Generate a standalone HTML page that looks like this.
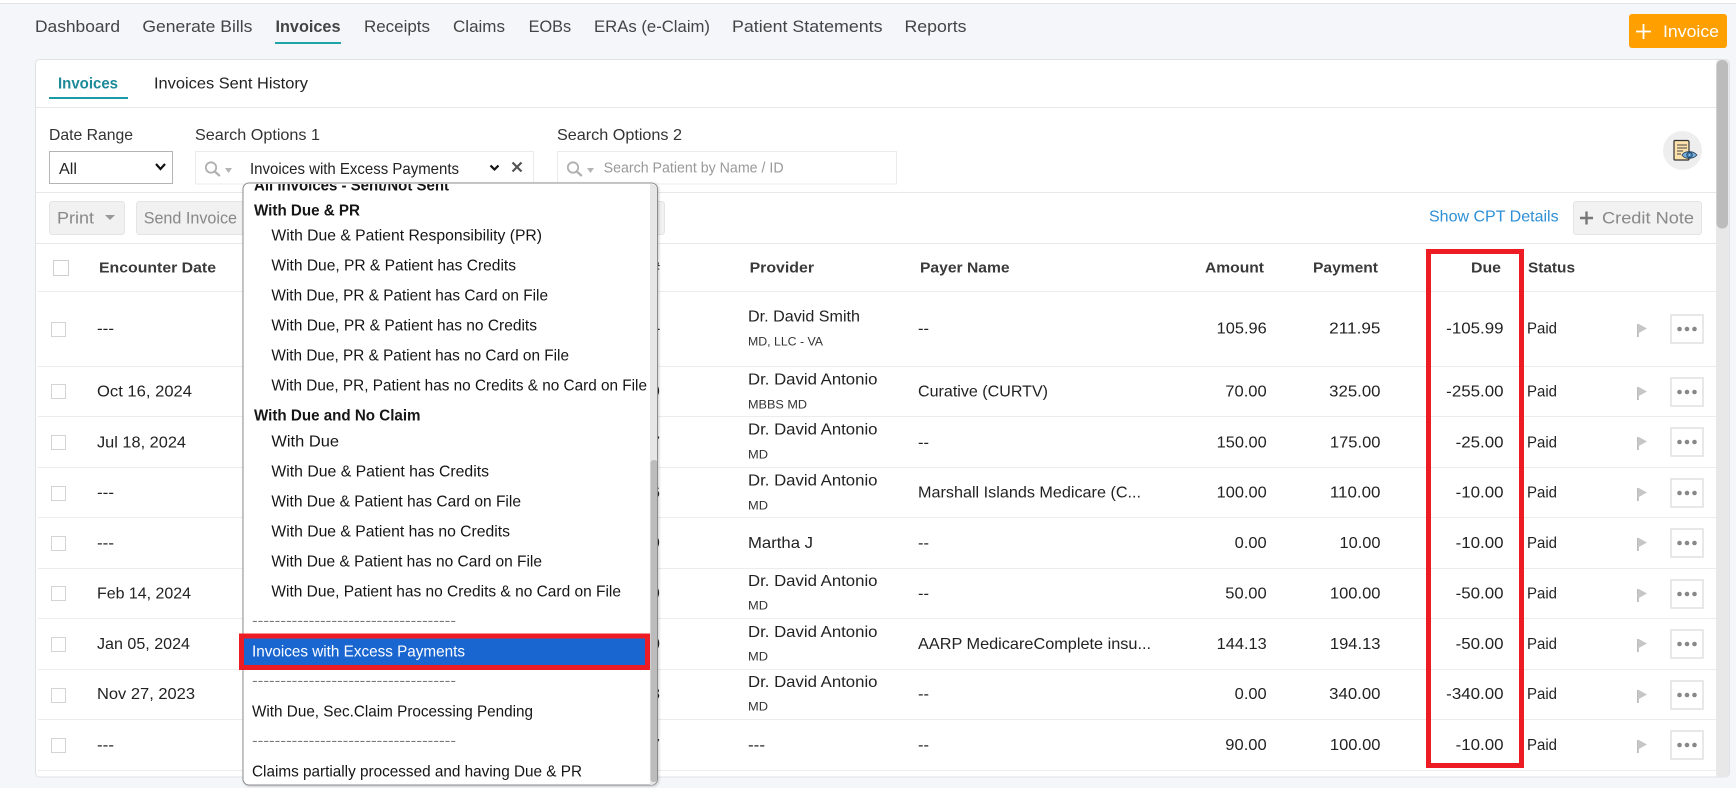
<!DOCTYPE html>
<html lang="en">
<head>
<meta charset="utf-8">
<title>Invoices</title>
<style>
html,body{margin:0;padding:0;background:#f4f6fa;width:1736px;height:788px;overflow:hidden}
svg{display:block}
text{font-family:"Liberation Sans",Arial,sans-serif;white-space:pre;transform:translateY(-1px)}
.n{font-size:17px;fill:#444}
.b{font-size:16px;fill:#222}
.l{font-size:16px;fill:#333;transform:none}
.h{font-size:15px;font-weight:700;fill:#3a3a3a}
.s{font-size:12px;fill:#333;transform:none}
.d{font-size:16px;fill:#151515}
.g{font-size:16px;font-weight:700;fill:#151515}
.m{font-size:14px;fill:#777}
.t{font-size:17px;fill:#888}
</style>
</head>
<body>
<svg xmlns="http://www.w3.org/2000/svg" width="1736" height="788" viewBox="0 0 1736 788">
<defs>
<g id="flag"><path d="M0 0h1.8v13H0z" fill="#bdbdbd"/><path d="M1.8 0l8.2 4.5-8.2 4.5z" fill="#c6c6c6"/></g>
<g id="more"><rect x="1" y="1" width="32" height="28" fill="#fff" stroke="#e2e2e2" stroke-width="1.6"/><circle cx="9.5" cy="15" r="2.3" fill="#888"/><circle cx="17" cy="15" r="2.3" fill="#888"/><circle cx="24.5" cy="15" r="2.3" fill="#888"/></g>
<g id="search"><circle cx="6" cy="5.5" r="5.2" fill="none" stroke="#b0b0b0" stroke-width="1.8"/><path d="M9.8 9.5l5 4.5" stroke="#b0b0b0" stroke-width="2.2"/><path d="M20 6h7l-3.5 5z" fill="#b5b5b5"/></g>
<clipPath id="dd"><rect x="243" y="184" width="414" height="601" rx="6"/></clipPath>
<filter id="sh" x="-5%" y="-5%" width="110%" height="110%"><feDropShadow dx="1" dy="1" stdDeviation="1.2" flood-color="#000" flood-opacity=".2"/></filter>
</defs>

<rect width="1736" height="788" fill="#f4f6fa"/>
<rect width="1736" height="3" fill="#fff"/>
<rect y="3" width="1736" height="1" fill="#e2e3e7"/>

<!-- top nav -->
<text class="n" x="35" y="33" textLength="85" lengthAdjust="spacingAndGlyphs">Dashboard</text>
<text class="n" x="142.4" y="33" textLength="110" lengthAdjust="spacingAndGlyphs">Generate Bills</text>
<text class="n" x="275.5" y="33" textLength="65" lengthAdjust="spacingAndGlyphs" style="font-weight:700">Invoices</text>
<rect x="275" y="42" width="66" height="2" fill="#1fa5a5"/>
<text class="n" x="364" y="33" textLength="66" lengthAdjust="spacingAndGlyphs">Receipts</text>
<text class="n" x="453" y="33" textLength="52" lengthAdjust="spacingAndGlyphs">Claims</text>
<text class="n" x="528.6" y="33" textLength="42.5" lengthAdjust="spacingAndGlyphs">EOBs</text>
<text class="n" x="594" y="33" textLength="116" lengthAdjust="spacingAndGlyphs">ERAs (e-Claim)</text>
<text class="n" x="732" y="33" textLength="150.5" lengthAdjust="spacingAndGlyphs">Patient Statements</text>
<text class="n" x="904.5" y="33" textLength="62" lengthAdjust="spacingAndGlyphs">Reports</text>

<rect x="1629" y="14" width="98" height="34" rx="3" fill="#ff9f00"/>
<path d="M1643.5 24v15M1636 31.5h15" stroke="#fff" stroke-width="1.8"/>
<text x="1663" y="38" textLength="56" lengthAdjust="spacingAndGlyphs" style="font-size:17px;fill:#fff">Invoice</text>

<!-- card -->
<rect x="35.5" y="59.5" width="1694" height="717.5" rx="4" fill="#fff" stroke="#dfe1e5"/>

<!-- tabs -->
<text x="58" y="89.5" textLength="60" lengthAdjust="spacingAndGlyphs" style="font-size:16px;font-weight:700;fill:#1c8a99">Invoices</text>
<rect x="49" y="97" width="79" height="2" fill="#1a9ba5"/>
<text class="b" x="154" y="89.5" textLength="154" lengthAdjust="spacingAndGlyphs">Invoices Sent History</text>
<rect x="36" y="107" width="1680" height="1" fill="#e8e8e8"/>

<!-- filters -->
<text class="l" x="49" y="140" textLength="84" lengthAdjust="spacingAndGlyphs">Date Range</text>
<text class="l" x="195" y="140" textLength="125" lengthAdjust="spacingAndGlyphs">Search Options 1</text>
<text class="l" x="557" y="140" textLength="125" lengthAdjust="spacingAndGlyphs">Search Options 2</text>

<rect x="49.5" y="151.5" width="123" height="32" fill="#fff" stroke="#b4b4b4"/>
<text class="b" x="59" y="175" textLength="18" lengthAdjust="spacingAndGlyphs">All</text>
<path d="M156 164l4.5 5 4.5-5" fill="none" stroke="#111" stroke-width="2.2"/>

<rect x="195.5" y="151.5" width="338" height="32.5" fill="#fff" stroke="#ebebeb"/>
<use href="#search" x="205" y="162"/>
<text class="b" x="250" y="175" textLength="209" lengthAdjust="spacingAndGlyphs">Invoices with Excess Payments</text>
<path d="M490.5 165.5l4 4 4-4" fill="none" stroke="#111" stroke-width="2.2"/>
<path d="M512.5 162.5l9 9M521.5 162.5l-9 9" stroke="#555" stroke-width="2.2"/>

<rect x="557.5" y="151.5" width="339" height="32.5" fill="#fff" stroke="#ebebeb"/>
<use href="#search" x="567" y="162"/>
<text x="603.6" y="173.5" textLength="180" lengthAdjust="spacingAndGlyphs" style="font-size:15px;fill:#999">Search Patient by Name / ID</text>

<circle cx="1682.5" cy="150.5" r="19.5" fill="#eeeeee"/>
<path d="M1675 140.5h12.5a1.5 1.5 0 0 1 1.5 1.5v17a1 1 0 0 1-1 1h-13a1 1 0 0 1-1-1v-17.500a1 1 0 0 1 1-1z" fill="#fde2ab" stroke="#333" stroke-width="1.2"/>
<path d="M1677 145h10M1677 148h10M1677 151h6M1677 154h4" stroke="#444" stroke-width="1"/>
<path d="M1682 155c3-4.500 11-4.500 15 0-4 4.500-12 4.500-15 0z" fill="#7ab3e0" stroke="#2f4a63" stroke-width=".9"/>
<circle cx="1689.5" cy="155" r="2.8" fill="#3d7fb5" stroke="#24405a" stroke-width=".8"/>
<circle cx="1689.5" cy="155" r="1" fill="#8fc2ea"/>

<rect x="36" y="192" width="1680" height="1" fill="#e8e8e8"/>

<!-- toolbar -->
<rect x="49.5" y="201.5" width="75" height="33" rx="3" fill="#f1f1f1" stroke="#e4e4e4"/>
<text class="t" x="57" y="224.5" textLength="37" lengthAdjust="spacingAndGlyphs">Print</text>
<path d="M105 215h10l-5 5z" fill="#999"/>
<rect x="136.5" y="201.5" width="528" height="33" rx="3" fill="#f1f1f1" stroke="#e4e4e4"/>
<text class="t" x="143.7" y="224.5" textLength="93.3" lengthAdjust="spacingAndGlyphs">Send Invoice</text>

<text x="1429" y="222.5" textLength="129.6" lengthAdjust="spacingAndGlyphs" style="font-size:16px;fill:#2d8fd5">Show CPT Details</text>
<rect x="1573.5" y="201.5" width="128" height="33" rx="3" fill="#f2f2f2" stroke="#e4e4e4"/>
<path d="M1586.5 211.5v13M1580 218h13" stroke="#777" stroke-width="2.4"/>
<text class="t" x="1602" y="224.5" textLength="92" lengthAdjust="spacingAndGlyphs">Credit Note</text>

<rect x="36" y="243" width="1680" height="1" fill="#e8e8e8"/>

<!-- table header -->
<rect x="53.5" y="260.5" width="15" height="15" fill="#fff" stroke="#cfcfcf"/>
<text class="h" x="99" y="273.3" textLength="117" lengthAdjust="spacingAndGlyphs">Encounter Date</text>
<text class="h" x="651" y="273.3" textLength="9" lengthAdjust="spacingAndGlyphs">#</text>
<text class="h" x="749.6" y="273.3" textLength="64.4" lengthAdjust="spacingAndGlyphs">Provider</text>
<text class="h" x="920" y="273.3" textLength="89.6" lengthAdjust="spacingAndGlyphs">Payer Name</text>
<text class="h" x="1205" y="273.3" textLength="59" lengthAdjust="spacingAndGlyphs">Amount</text>
<text class="h" x="1313" y="273.3" textLength="65" lengthAdjust="spacingAndGlyphs">Payment</text>
<text class="h" x="1471" y="273.3" textLength="30" lengthAdjust="spacingAndGlyphs">Due</text>
<text class="h" x="1528" y="273.3" textLength="47" lengthAdjust="spacingAndGlyphs">Status</text>

<!-- row dividers -->
<g fill="#ececec">
<rect x="38" y="291" width="1678" height="1"/>
<rect x="38" y="366" width="1678" height="1"/>
<rect x="38" y="416" width="1678" height="1"/>
<rect x="38" y="467" width="1678" height="1"/>
<rect x="38" y="517" width="1678" height="1"/>
<rect x="38" y="568" width="1678" height="1"/>
<rect x="38" y="618" width="1678" height="1"/>
<rect x="38" y="669" width="1678" height="1"/>
<rect x="38" y="719" width="1678" height="1"/>
<rect x="38" y="770" width="1678" height="1"/>
</g>

<!-- checkboxes -->
<g fill="#fff" stroke="#d4d4d4">
<rect x="51.5" y="322.5" width="14" height="14"/>
<rect x="51.5" y="384.5" width="14" height="14"/>
<rect x="51.5" y="435.5" width="14" height="14"/>
<rect x="51.5" y="486.5" width="14" height="14"/>
<rect x="51.5" y="536.5" width="14" height="14"/>
<rect x="51.5" y="586.5" width="14" height="14"/>
<rect x="51.5" y="637.5" width="14" height="14"/>
<rect x="51.5" y="688.5" width="14" height="14"/>
<rect x="51.5" y="738.5" width="14" height="14"/>
</g>

<!-- dates -->
<text class="b" x="97" y="334.5" textLength="17" lengthAdjust="spacingAndGlyphs">---</text>
<text class="b" x="97" y="397.5" textLength="95" lengthAdjust="spacingAndGlyphs">Oct 16, 2024</text>
<text class="b" x="97" y="448.5" textLength="89" lengthAdjust="spacingAndGlyphs">Jul 18, 2024</text>
<text class="b" x="97" y="498.5" textLength="17" lengthAdjust="spacingAndGlyphs">---</text>
<text class="b" x="97" y="549" textLength="17" lengthAdjust="spacingAndGlyphs">---</text>
<text class="b" x="97" y="599.5" textLength="94" lengthAdjust="spacingAndGlyphs">Feb 14, 2024</text>
<text class="b" x="97" y="650" textLength="93" lengthAdjust="spacingAndGlyphs">Jan 05, 2024</text>
<text class="b" x="97" y="700" textLength="98" lengthAdjust="spacingAndGlyphs">Nov 27, 2023</text>
<text class="b" x="97" y="751" textLength="17" lengthAdjust="spacingAndGlyphs">---</text>

<!-- invoice # slivers behind dropdown -->
<text class="b" x="655" y="334.5">-</text>
<text class="b" x="651" y="397.5">9</text>
<text class="b" x="651" y="448.5">7</text>
<text class="b" x="651" y="498.5">6</text>
<text class="b" x="651" y="549">9</text>
<text class="b" x="651" y="599.5">9</text>
<text class="b" x="651" y="650">0</text>
<text class="b" x="651" y="700">8</text>
<text class="b" x="651" y="751">7</text>

<!-- providers -->
<text class="b" x="748" y="322.5" textLength="112" lengthAdjust="spacingAndGlyphs">Dr. David Smith</text>
<text class="s" x="748" y="345.3" textLength="75" lengthAdjust="spacingAndGlyphs">MD, LLC - VA</text>
<text class="b" x="748" y="385.7" textLength="129.5" lengthAdjust="spacingAndGlyphs">Dr. David Antonio</text>
<text class="s" x="748" y="408.3" textLength="59" lengthAdjust="spacingAndGlyphs">MBBS MD</text>
<text class="b" x="748" y="435.7" textLength="129.5" lengthAdjust="spacingAndGlyphs">Dr. David Antonio</text>
<text class="s" x="748" y="458.3" textLength="20" lengthAdjust="spacingAndGlyphs">MD</text>
<text class="b" x="748" y="486.7" textLength="129.5" lengthAdjust="spacingAndGlyphs">Dr. David Antonio</text>
<text class="s" x="748" y="509.3" textLength="20" lengthAdjust="spacingAndGlyphs">MD</text>
<text class="b" x="748" y="549" textLength="65" lengthAdjust="spacingAndGlyphs">Martha J</text>
<text class="b" x="748" y="587" textLength="129.5" lengthAdjust="spacingAndGlyphs">Dr. David Antonio</text>
<text class="s" x="748" y="609.5" textLength="20" lengthAdjust="spacingAndGlyphs">MD</text>
<text class="b" x="748" y="638" textLength="129.5" lengthAdjust="spacingAndGlyphs">Dr. David Antonio</text>
<text class="s" x="748" y="660.5" textLength="20" lengthAdjust="spacingAndGlyphs">MD</text>
<text class="b" x="748" y="688" textLength="129.5" lengthAdjust="spacingAndGlyphs">Dr. David Antonio</text>
<text class="s" x="748" y="710.5" textLength="20" lengthAdjust="spacingAndGlyphs">MD</text>
<text class="b" x="748" y="751" textLength="17" lengthAdjust="spacingAndGlyphs">---</text>

<!-- payer -->
<text class="b" x="918" y="334.5" textLength="11" lengthAdjust="spacingAndGlyphs">--</text>
<text class="b" x="918" y="397.5" textLength="130" lengthAdjust="spacingAndGlyphs">Curative (CURTV)</text>
<text class="b" x="918" y="448.5" textLength="11" lengthAdjust="spacingAndGlyphs">--</text>
<text class="b" x="918" y="498.5" textLength="223" lengthAdjust="spacingAndGlyphs">Marshall Islands Medicare (C...</text>
<text class="b" x="918" y="549" textLength="11" lengthAdjust="spacingAndGlyphs">--</text>
<text class="b" x="918" y="599.5" textLength="11" lengthAdjust="spacingAndGlyphs">--</text>
<text class="b" x="918" y="650" textLength="233" lengthAdjust="spacingAndGlyphs">AARP MedicareComplete insu...</text>
<text class="b" x="918" y="700" textLength="11" lengthAdjust="spacingAndGlyphs">--</text>
<text class="b" x="918" y="751" textLength="11" lengthAdjust="spacingAndGlyphs">--</text>

<!-- amount -->
<text class="b" x="1216.7" y="334.5" textLength="50" lengthAdjust="spacingAndGlyphs">105.96</text>
<text class="b" x="1225.3" y="397.5" textLength="41.4" lengthAdjust="spacingAndGlyphs">70.00</text>
<text class="b" x="1216.7" y="448.5" textLength="50" lengthAdjust="spacingAndGlyphs">150.00</text>
<text class="b" x="1216.7" y="498.5" textLength="50" lengthAdjust="spacingAndGlyphs">100.00</text>
<text class="b" x="1234.7" y="549" textLength="32" lengthAdjust="spacingAndGlyphs">0.00</text>
<text class="b" x="1225.3" y="599.5" textLength="41.4" lengthAdjust="spacingAndGlyphs">50.00</text>
<text class="b" x="1216.7" y="650" textLength="50" lengthAdjust="spacingAndGlyphs">144.13</text>
<text class="b" x="1234.7" y="700" textLength="32" lengthAdjust="spacingAndGlyphs">0.00</text>
<text class="b" x="1225.3" y="751" textLength="41.4" lengthAdjust="spacingAndGlyphs">90.00</text>

<!-- payment -->
<text class="b" x="1329.2" y="334.5" textLength="51.3" lengthAdjust="spacingAndGlyphs">211.95</text>
<text class="b" x="1329.2" y="397.5" textLength="51.3" lengthAdjust="spacingAndGlyphs">325.00</text>
<text class="b" x="1329.9" y="448.5" textLength="50.6" lengthAdjust="spacingAndGlyphs">175.00</text>
<text class="b" x="1329.9" y="498.5" textLength="50.6" lengthAdjust="spacingAndGlyphs">110.00</text>
<text class="b" x="1339.5" y="549" textLength="41" lengthAdjust="spacingAndGlyphs">10.00</text>
<text class="b" x="1329.9" y="599.5" textLength="50.6" lengthAdjust="spacingAndGlyphs">100.00</text>
<text class="b" x="1329.9" y="650" textLength="50.6" lengthAdjust="spacingAndGlyphs">194.13</text>
<text class="b" x="1329.2" y="700" textLength="51.3" lengthAdjust="spacingAndGlyphs">340.00</text>
<text class="b" x="1329.9" y="751" textLength="50.6" lengthAdjust="spacingAndGlyphs">100.00</text>

<!-- due -->
<text class="b" x="1446.2" y="334.5" textLength="57.4" lengthAdjust="spacingAndGlyphs">-105.99</text>
<text class="b" x="1446.2" y="397.5" textLength="57.4" lengthAdjust="spacingAndGlyphs">-255.00</text>
<text class="b" x="1455.6" y="448.5" textLength="48" lengthAdjust="spacingAndGlyphs">-25.00</text>
<text class="b" x="1455.6" y="498.5" textLength="48" lengthAdjust="spacingAndGlyphs">-10.00</text>
<text class="b" x="1455.6" y="549" textLength="48" lengthAdjust="spacingAndGlyphs">-10.00</text>
<text class="b" x="1455.6" y="599.5" textLength="48" lengthAdjust="spacingAndGlyphs">-50.00</text>
<text class="b" x="1455.6" y="650" textLength="48" lengthAdjust="spacingAndGlyphs">-50.00</text>
<text class="b" x="1446.2" y="700" textLength="57.4" lengthAdjust="spacingAndGlyphs">-340.00</text>
<text class="b" x="1455.6" y="751" textLength="48" lengthAdjust="spacingAndGlyphs">-10.00</text>

<!-- status -->
<text class="b" x="1527" y="334.5" textLength="30" lengthAdjust="spacingAndGlyphs">Paid</text>
<text class="b" x="1527" y="397.5" textLength="30" lengthAdjust="spacingAndGlyphs">Paid</text>
<text class="b" x="1527" y="448.5" textLength="30" lengthAdjust="spacingAndGlyphs">Paid</text>
<text class="b" x="1527" y="498.5" textLength="30" lengthAdjust="spacingAndGlyphs">Paid</text>
<text class="b" x="1527" y="549" textLength="30" lengthAdjust="spacingAndGlyphs">Paid</text>
<text class="b" x="1527" y="599.5" textLength="30" lengthAdjust="spacingAndGlyphs">Paid</text>
<text class="b" x="1527" y="650" textLength="30" lengthAdjust="spacingAndGlyphs">Paid</text>
<text class="b" x="1527" y="700" textLength="30" lengthAdjust="spacingAndGlyphs">Paid</text>
<text class="b" x="1527" y="751" textLength="30" lengthAdjust="spacingAndGlyphs">Paid</text>

<!-- flags and row menus -->
<use href="#flag" x="1637" y="324"/><use href="#more" x="1670" y="314"/>
<use href="#flag" x="1637" y="387"/><use href="#more" x="1670" y="377"/>
<use href="#flag" x="1637" y="437"/><use href="#more" x="1670" y="427"/>
<use href="#flag" x="1637" y="488"/><use href="#more" x="1670" y="478"/>
<use href="#flag" x="1637" y="538"/><use href="#more" x="1670" y="528"/>
<use href="#flag" x="1637" y="589"/><use href="#more" x="1670" y="579"/>
<use href="#flag" x="1637" y="639"/><use href="#more" x="1670" y="629"/>
<use href="#flag" x="1637" y="690"/><use href="#more" x="1670" y="680"/>
<use href="#flag" x="1637" y="740"/><use href="#more" x="1670" y="730"/>

<!-- main scrollbar -->
<rect x="1716" y="60" width="13" height="717" rx="3" fill="#e8e8e8"/>
<rect x="1716.5" y="60" width="11.5" height="168.500" rx="5.5" fill="#bcbcbc"/>

<!-- due highlight -->
<rect x="1428.5" y="251.5" width="93" height="514" fill="none" stroke="#ed1c24" stroke-width="5"/>

<!-- dropdown -->
<rect x="243" y="183" width="414.5" height="602" rx="6" fill="#fff" stroke="#8c8c8c" filter="url(#sh)"/>
<g clip-path="url(#dd)">
<rect x="650" y="184" width="8" height="601" fill="#e6e6e6"/>
<rect x="650.5" y="460" width="7" height="322" rx="3" fill="#bcbcbc"/>
<text class="g" x="254" y="191.5" textLength="195" lengthAdjust="spacingAndGlyphs">All Invoices - Sent/Not Sent</text>
<text class="g" x="254" y="216.5" textLength="106" lengthAdjust="spacingAndGlyphs">With Due &amp; PR</text>
<text class="d" x="271.4" y="241.7" textLength="270.6" lengthAdjust="spacingAndGlyphs">With Due &amp; Patient Responsibility (PR)</text>
<text class="d" x="271.4" y="271.7" textLength="244.6" lengthAdjust="spacingAndGlyphs">With Due, PR &amp; Patient has Credits</text>
<text class="d" x="271.4" y="301.7" textLength="276.6" lengthAdjust="spacingAndGlyphs">With Due, PR &amp; Patient has Card on File</text>
<text class="d" x="271.4" y="331.7" textLength="265.6" lengthAdjust="spacingAndGlyphs">With Due, PR &amp; Patient has no Credits</text>
<text class="d" x="271.4" y="361.7" textLength="297.6" lengthAdjust="spacingAndGlyphs">With Due, PR &amp; Patient has no Card on File</text>
<text class="d" x="271.4" y="391.7" textLength="375.6" lengthAdjust="spacingAndGlyphs">With Due, PR, Patient has no Credits &amp; no Card on File</text>
<text class="g" x="254" y="421.4" textLength="166.5" lengthAdjust="spacingAndGlyphs">With Due and No Claim</text>
<text class="d" x="271.4" y="447.4" textLength="67.6" lengthAdjust="spacingAndGlyphs">With Due</text>
<text class="d" x="271.4" y="477.4" textLength="217.6" lengthAdjust="spacingAndGlyphs">With Due &amp; Patient has Credits</text>
<text class="d" x="271.4" y="507.4" textLength="249.6" lengthAdjust="spacingAndGlyphs">With Due &amp; Patient has Card on File</text>
<text class="d" x="271.4" y="537.4" textLength="238.6" lengthAdjust="spacingAndGlyphs">With Due &amp; Patient has no Credits</text>
<text class="d" x="271.4" y="567.4" textLength="270.6" lengthAdjust="spacingAndGlyphs">With Due &amp; Patient has no Card on File</text>
<text class="d" x="271.4" y="597.4" textLength="349.6" lengthAdjust="spacingAndGlyphs">With Due, Patient has no Credits &amp; no Card on File</text>
<text class="m" x="252" y="626" textLength="204" lengthAdjust="spacingAndGlyphs">------------------------------------</text>
<rect x="244" y="638" width="403" height="27" fill="#1a66d1"/>
<text x="252" y="657.4" textLength="213" lengthAdjust="spacingAndGlyphs" style="font-size:16px;fill:#fff">Invoices with Excess Payments</text>
<text class="m" x="252" y="686" textLength="204" lengthAdjust="spacingAndGlyphs">------------------------------------</text>
<text class="d" x="252" y="717.4" textLength="281" lengthAdjust="spacingAndGlyphs">With Due, Sec.Claim Processing Pending</text>
<text class="m" x="252" y="746" textLength="204" lengthAdjust="spacingAndGlyphs">------------------------------------</text>
<text class="d" x="252" y="777.4" textLength="330" lengthAdjust="spacingAndGlyphs">Claims partially processed and having Due &amp; PR</text>
</g>

<!-- selected option highlight -->
<rect x="241.5" y="636" width="406" height="31.5" fill="none" stroke="#ed1c24" stroke-width="5"/>
</svg>
</body>
</html>
